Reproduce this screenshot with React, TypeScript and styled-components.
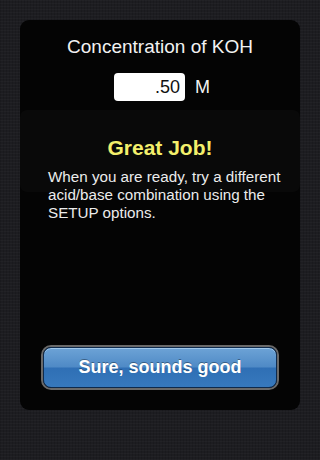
import React, { useState } from 'react';
import styled, { createGlobalStyle } from 'styled-components';

const GlobalStyle = createGlobalStyle`
  html, body {
    margin: 0;
    padding: 0;
  }
  body {
    width: 320px;
    height: 460px;
    overflow: hidden;
    font-family: "Liberation Sans", Arial, sans-serif;
    background-color: #1d1d21;
    background-image:
      repeating-linear-gradient(0deg, rgba(255,255,255,0.025) 0 1px, transparent 1px 3px),
      repeating-linear-gradient(90deg, rgba(0,0,0,0.12) 0 1px, transparent 1px 3px);
  }
`;

const Screen = styled.div`
  width: 320px;
  height: 460px;
  box-sizing: border-box;
  padding: 20px 20px 50px;
`;

const Panel = styled.div`
  height: 390px;
  background: #040404;
  border-radius: 9px;
  display: flex;
  flex-direction: column;
  align-items: center;
`;

const Title = styled.h2`
  margin: 16px 0 0;
  font-size: 19px;
  font-weight: normal;
  color: #f2f2f2;
  line-height: 22px;
`;

const InputRow = styled.div`
  display: flex;
  align-items: center;
  gap: 10px;
  margin-top: 15px;
  margin-left: 4px;
`;

const ValueInput = styled.input`
  width: 71px;
  height: 28px;
  box-sizing: border-box;
  border: none;
  border-radius: 4px;
  background: #fff;
  text-align: right;
  padding: 0 5px;
  font-family: "Liberation Sans", Arial, sans-serif;
  font-size: 18px;
  color: #111;
  outline: none;
`;

const Unit = styled.span`
  font-size: 18px;
  color: #f2f2f2;
`;

const MessageBox = styled.div`
  align-self: stretch;
  margin-top: 9px;
  height: 82px;
  background: #090909;
  border-radius: 7px;
  display: flex;
  flex-direction: column;
  align-items: center;
`;

const Heading = styled.h3<{ $color: string }>`
  margin: 26px 0 0;
  font-size: 21px;
  font-weight: bold;
  color: ${p => p.$color};
  line-height: 24px;
`;

const Body = styled.p`
  margin: 8px 0 0;
  padding: 0 8px 0 28px;
  align-self: stretch;
  font-size: 15.2px;
  line-height: 18px;
  color: #ececec;
`;

const Spacer = styled.div`
  flex: 1;
`;

const ActionButton = styled.button`
  width: 238px;
  height: 45px;
  margin-bottom: 20px;
  box-sizing: border-box;
  border: 2px solid #6a6a6a;
  border-radius: 10px;
  padding: 0;
  background: #1a1a1a;
  cursor: pointer;
  display: flex;
`;

const ButtonFace = styled.span`
  flex: 1;
  border-radius: 8px;
  border: 1px solid #0e2a4c;
  box-shadow: inset 0 1px 0 rgba(180, 215, 245, 0.7);
  background: linear-gradient(
    to bottom,
    #6da3d6 0%,
    #4f8ac6 48%,
    #2f6fb5 52%,
    #3779bd 100%
  );
  display: flex;
  align-items: center;
  justify-content: center;
  font-family: "Liberation Sans", Arial, sans-serif;
  font-size: 18px;
  font-weight: bold;
  color: #fff;
  text-shadow: 0 -1px 0 rgba(0, 0, 0, 0.35);
`;

export default function App() {
  const [value, setValue] = useState('.50');

  return (
    <>
      <GlobalStyle />
      <Screen>
        <Panel>
          <Title>Concentration of KOH</Title>
          <InputRow>
            <ValueInput value={value} onChange={e => setValue(e.target.value)} />
            <Unit>M</Unit>
          </InputRow>
          <MessageBox>
            <Heading $color="#f3ef6b">Great Job!</Heading>
            <Body>
              When you are ready, try a different acid/base combination using the SETUP options.
            </Body>
          </MessageBox>
          <Spacer />
          <ActionButton>
            <ButtonFace>Sure, sounds good</ButtonFace>
          </ActionButton>
        </Panel>
      </Screen>
    </>
  );
}
